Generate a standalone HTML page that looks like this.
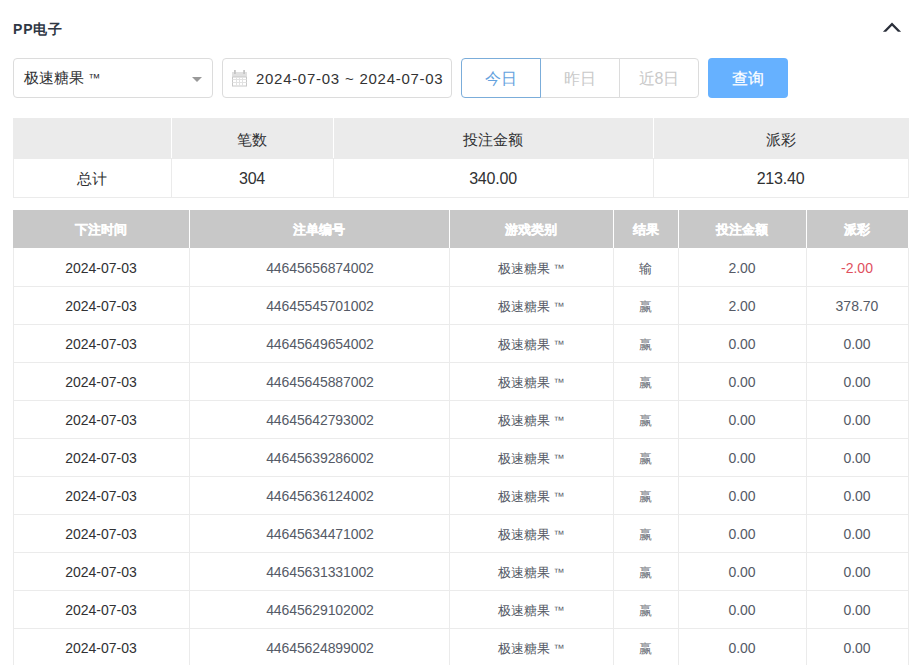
<!DOCTYPE html><html><head><meta charset="utf-8"><style>
*{margin:0;padding:0;box-sizing:border-box}
html,body{width:911px;height:665px;overflow:hidden;background:#fff}
body{position:relative;font-family:"Liberation Sans",sans-serif;color:#303133}
.a{position:absolute}
.title{left:13px;top:20px;font-size:14px;font-weight:bold;color:#2f3744;line-height:18px;letter-spacing:0.8px}
.chev{left:881px;top:20px}
.box{border:1px solid #dcdcdc;border-radius:4px;background:#fff}
.sel{left:13px;top:58px;width:200px;height:40px}
.seltxt{left:24px;top:68px;font-size:15px;line-height:20px;color:#303133}
.tri{left:192px;top:77px;width:0;height:0;border-left:5px solid transparent;border-right:5px solid transparent;border-top:5px solid #999}
.date{left:222px;top:58px;width:230px;height:40px}
.datetxt{left:256px;top:69px;font-size:15px;line-height:20px;color:#333;white-space:nowrap;letter-spacing:0.7px;word-spacing:0.3px}
.bg{top:58px;height:40px;font-size:16px;line-height:40px;text-align:center;color:#c9c9c9;border:1px solid #dcdcdc;background:#fff}
.q{left:708px;top:58px;width:80px;height:40px;background:#66b1ff;border-radius:4px;color:#fff;font-size:16px;line-height:41px;text-align:center;-webkit-text-stroke:0.2px #fff}
.cell{position:absolute;text-align:center;white-space:nowrap}
</style></head><body><div class="a title">PP电子</div>
<svg class="a chev" width="22" height="14" viewBox="0 0 22 14"><polygon points="1.9,11.7 11,2.4 20.1,11.7 16.9,11.7 11,5.7 5.1,11.7" fill="#2a2f3a"/></svg>
<div class="a box sel"></div><div class="a seltxt">极速糖果 <span style="font-size:12px;position:relative;top:-1px">™</span></div><div class="a tri"></div>
<div class="a box date"></div>
<svg class="a" style="left:226px;top:64px" width="28" height="28" viewBox="0 0 28 28"><rect x="6.5" y="8.5" width="14" height="13.5" fill="none" stroke="#c8c8c8" stroke-width="1"/><rect x="6" y="8" width="15" height="5" fill="#e0e0e0"/><line x1="6.5" y1="13" x2="20.5" y2="13" stroke="#c8c8c8"/><rect x="8" y="6" width="1.8" height="4" fill="#c4c4c4"/><rect x="17.2" y="6" width="1.8" height="4" fill="#c4c4c4"/><g stroke="#e2e2e2" stroke-width="1"><line x1="10.5" y1="13" x2="10.5" y2="22"/><line x1="13.5" y1="13" x2="13.5" y2="22"/><line x1="16.5" y1="13" x2="16.5" y2="22"/><line x1="6.5" y1="15.5" x2="20.5" y2="15.5"/><line x1="6.5" y1="18.5" x2="20.5" y2="18.5"/></g></svg>
<div class="a datetxt">2024-07-03 ~ 2024-07-03</div>
<div class="a bg" style="left:461px;width:80px;border-color:#7badda;color:#64a2de;border-radius:4px 0 0 4px;z-index:2">今日</div>
<div class="a bg" style="left:540px;width:80px">昨日</div>
<div class="a bg" style="left:619px;width:80px;border-radius:0 4px 4px 0">近8日</div>
<div class="a q">查询</div>
<div class="a" style="left:13px;top:118px;width:896px;height:40px;background:#ebebeb"></div>
<div class="a" style="left:13px;top:118px;width:896px;height:80px;border:1px solid #ebebeb;border-top:none"></div>
<div class="a" style="left:13px;top:158px;width:896px;height:1px;background:#ebebeb"></div>
<div class="a" style="left:171px;top:118px;width:1px;height:40px;background:#fff"></div>
<div class="a" style="left:171px;top:158px;width:1px;height:40px;background:#ebebeb"></div>
<div class="a" style="left:333px;top:118px;width:1px;height:40px;background:#fff"></div>
<div class="a" style="left:333px;top:158px;width:1px;height:40px;background:#ebebeb"></div>
<div class="a" style="left:653px;top:118px;width:1px;height:40px;background:#fff"></div>
<div class="a" style="left:653px;top:158px;width:1px;height:40px;background:#ebebeb"></div>
<div class="cell" style="left:13px;top:120px;width:158px;height:40px;line-height:40px;font-size:15px;color:#303133"></div>
<div class="cell" style="left:13px;top:158px;width:158px;height:40px;line-height:41px;font-size:15px;color:#303133">总计</div>
<div class="cell" style="left:171px;top:120px;width:162px;height:40px;line-height:40px;font-size:15px;color:#303133">笔数</div>
<div class="cell" style="left:171px;top:158px;width:162px;height:40px;line-height:41px;font-size:16px;letter-spacing:-0.2px;color:#303133">304</div>
<div class="cell" style="left:333px;top:120px;width:320px;height:40px;line-height:40px;font-size:15px;color:#303133">投注金额</div>
<div class="cell" style="left:333px;top:158px;width:320px;height:40px;line-height:41px;font-size:16px;letter-spacing:-0.2px;color:#303133">340.00</div>
<div class="cell" style="left:653px;top:120px;width:255px;height:40px;line-height:40px;font-size:15px;color:#303133">派彩</div>
<div class="cell" style="left:653px;top:158px;width:255px;height:40px;line-height:41px;font-size:16px;letter-spacing:-0.2px;color:#303133">213.40</div>
<div class="a" style="left:13px;top:210px;width:895px;height:38px;background:#c8c8c8"></div>
<div class="a" style="left:189px;top:210px;width:1px;height:38px;background:#fff"></div>
<div class="a" style="left:449px;top:210px;width:1px;height:38px;background:#fff"></div>
<div class="a" style="left:613px;top:210px;width:1px;height:38px;background:#fff"></div>
<div class="a" style="left:678px;top:210px;width:1px;height:38px;background:#fff"></div>
<div class="a" style="left:806px;top:210px;width:1px;height:38px;background:#fff"></div>
<div class="cell" style="left:13px;top:211px;width:176px;height:38px;line-height:38px;font-size:13px;font-weight:bold;color:#fff;-webkit-text-stroke:0.3px #fff">下注时间</div>
<div class="cell" style="left:189px;top:211px;width:260px;height:38px;line-height:38px;font-size:13px;font-weight:bold;color:#fff;-webkit-text-stroke:0.3px #fff">注单编号</div>
<div class="cell" style="left:449px;top:211px;width:164px;height:38px;line-height:38px;font-size:13px;font-weight:bold;color:#fff;-webkit-text-stroke:0.3px #fff">游戏类别</div>
<div class="cell" style="left:613px;top:211px;width:65px;height:38px;line-height:38px;font-size:13px;font-weight:bold;color:#fff;-webkit-text-stroke:0.3px #fff">结果</div>
<div class="cell" style="left:678px;top:211px;width:128px;height:38px;line-height:38px;font-size:13px;font-weight:bold;color:#fff;-webkit-text-stroke:0.3px #fff">投注金额</div>
<div class="cell" style="left:806px;top:211px;width:102px;height:38px;line-height:38px;font-size:13px;font-weight:bold;color:#fff;-webkit-text-stroke:0.3px #fff">派彩</div>
<div class="cell" style="left:13px;top:248px;width:176px;height:38px;line-height:41px;font-size:14px;color:#303133">2024-07-03</div>
<div class="cell" style="left:189px;top:248px;width:260px;height:38px;line-height:41px;font-size:14px;color:#555a66;letter-spacing:-0.1px;padding-left:2px">44645656874002</div>
<div class="cell" style="left:449px;top:248px;width:164px;height:38px;line-height:41px;font-size:14px;color:#555a66"><span style="font-size:13px">极速糖果</span> <span style="font-size:11px;position:relative;top:-1px">™</span></div>
<div class="cell" style="left:613px;top:248px;width:65px;height:38px;line-height:41px;font-size:14px;color:#555a66"><span style="font-size:13px">输</span></div>
<div class="cell" style="left:678px;top:248px;width:128px;height:38px;line-height:41px;font-size:14px;color:#555a66">2.00</div>
<div class="cell" style="left:806px;top:248px;width:102px;height:38px;line-height:41px;font-size:14px;color:#e0505e">-2.00</div>
<div class="a" style="left:13px;top:286px;width:896px;height:1px;background:#ebebeb"></div>
<div class="cell" style="left:13px;top:286px;width:176px;height:38px;line-height:41px;font-size:14px;color:#303133">2024-07-03</div>
<div class="cell" style="left:189px;top:286px;width:260px;height:38px;line-height:41px;font-size:14px;color:#555a66;letter-spacing:-0.1px;padding-left:2px">44645545701002</div>
<div class="cell" style="left:449px;top:286px;width:164px;height:38px;line-height:41px;font-size:14px;color:#555a66"><span style="font-size:13px">极速糖果</span> <span style="font-size:11px;position:relative;top:-1px">™</span></div>
<div class="cell" style="left:613px;top:286px;width:65px;height:38px;line-height:41px;font-size:14px;color:#555a66"><span style="font-size:13px;color:#70747c">赢</span></div>
<div class="cell" style="left:678px;top:286px;width:128px;height:38px;line-height:41px;font-size:14px;color:#555a66">2.00</div>
<div class="cell" style="left:806px;top:286px;width:102px;height:38px;line-height:41px;font-size:14px;color:#555a66">378.70</div>
<div class="a" style="left:13px;top:324px;width:896px;height:1px;background:#ebebeb"></div>
<div class="cell" style="left:13px;top:324px;width:176px;height:38px;line-height:41px;font-size:14px;color:#303133">2024-07-03</div>
<div class="cell" style="left:189px;top:324px;width:260px;height:38px;line-height:41px;font-size:14px;color:#555a66;letter-spacing:-0.1px;padding-left:2px">44645649654002</div>
<div class="cell" style="left:449px;top:324px;width:164px;height:38px;line-height:41px;font-size:14px;color:#555a66"><span style="font-size:13px">极速糖果</span> <span style="font-size:11px;position:relative;top:-1px">™</span></div>
<div class="cell" style="left:613px;top:324px;width:65px;height:38px;line-height:41px;font-size:14px;color:#555a66"><span style="font-size:13px;color:#70747c">赢</span></div>
<div class="cell" style="left:678px;top:324px;width:128px;height:38px;line-height:41px;font-size:14px;color:#555a66">0.00</div>
<div class="cell" style="left:806px;top:324px;width:102px;height:38px;line-height:41px;font-size:14px;color:#555a66">0.00</div>
<div class="a" style="left:13px;top:362px;width:896px;height:1px;background:#ebebeb"></div>
<div class="cell" style="left:13px;top:362px;width:176px;height:38px;line-height:41px;font-size:14px;color:#303133">2024-07-03</div>
<div class="cell" style="left:189px;top:362px;width:260px;height:38px;line-height:41px;font-size:14px;color:#555a66;letter-spacing:-0.1px;padding-left:2px">44645645887002</div>
<div class="cell" style="left:449px;top:362px;width:164px;height:38px;line-height:41px;font-size:14px;color:#555a66"><span style="font-size:13px">极速糖果</span> <span style="font-size:11px;position:relative;top:-1px">™</span></div>
<div class="cell" style="left:613px;top:362px;width:65px;height:38px;line-height:41px;font-size:14px;color:#555a66"><span style="font-size:13px;color:#70747c">赢</span></div>
<div class="cell" style="left:678px;top:362px;width:128px;height:38px;line-height:41px;font-size:14px;color:#555a66">0.00</div>
<div class="cell" style="left:806px;top:362px;width:102px;height:38px;line-height:41px;font-size:14px;color:#555a66">0.00</div>
<div class="a" style="left:13px;top:400px;width:896px;height:1px;background:#ebebeb"></div>
<div class="cell" style="left:13px;top:400px;width:176px;height:38px;line-height:41px;font-size:14px;color:#303133">2024-07-03</div>
<div class="cell" style="left:189px;top:400px;width:260px;height:38px;line-height:41px;font-size:14px;color:#555a66;letter-spacing:-0.1px;padding-left:2px">44645642793002</div>
<div class="cell" style="left:449px;top:400px;width:164px;height:38px;line-height:41px;font-size:14px;color:#555a66"><span style="font-size:13px">极速糖果</span> <span style="font-size:11px;position:relative;top:-1px">™</span></div>
<div class="cell" style="left:613px;top:400px;width:65px;height:38px;line-height:41px;font-size:14px;color:#555a66"><span style="font-size:13px;color:#70747c">赢</span></div>
<div class="cell" style="left:678px;top:400px;width:128px;height:38px;line-height:41px;font-size:14px;color:#555a66">0.00</div>
<div class="cell" style="left:806px;top:400px;width:102px;height:38px;line-height:41px;font-size:14px;color:#555a66">0.00</div>
<div class="a" style="left:13px;top:438px;width:896px;height:1px;background:#ebebeb"></div>
<div class="cell" style="left:13px;top:438px;width:176px;height:38px;line-height:41px;font-size:14px;color:#303133">2024-07-03</div>
<div class="cell" style="left:189px;top:438px;width:260px;height:38px;line-height:41px;font-size:14px;color:#555a66;letter-spacing:-0.1px;padding-left:2px">44645639286002</div>
<div class="cell" style="left:449px;top:438px;width:164px;height:38px;line-height:41px;font-size:14px;color:#555a66"><span style="font-size:13px">极速糖果</span> <span style="font-size:11px;position:relative;top:-1px">™</span></div>
<div class="cell" style="left:613px;top:438px;width:65px;height:38px;line-height:41px;font-size:14px;color:#555a66"><span style="font-size:13px;color:#70747c">赢</span></div>
<div class="cell" style="left:678px;top:438px;width:128px;height:38px;line-height:41px;font-size:14px;color:#555a66">0.00</div>
<div class="cell" style="left:806px;top:438px;width:102px;height:38px;line-height:41px;font-size:14px;color:#555a66">0.00</div>
<div class="a" style="left:13px;top:476px;width:896px;height:1px;background:#ebebeb"></div>
<div class="cell" style="left:13px;top:476px;width:176px;height:38px;line-height:41px;font-size:14px;color:#303133">2024-07-03</div>
<div class="cell" style="left:189px;top:476px;width:260px;height:38px;line-height:41px;font-size:14px;color:#555a66;letter-spacing:-0.1px;padding-left:2px">44645636124002</div>
<div class="cell" style="left:449px;top:476px;width:164px;height:38px;line-height:41px;font-size:14px;color:#555a66"><span style="font-size:13px">极速糖果</span> <span style="font-size:11px;position:relative;top:-1px">™</span></div>
<div class="cell" style="left:613px;top:476px;width:65px;height:38px;line-height:41px;font-size:14px;color:#555a66"><span style="font-size:13px;color:#70747c">赢</span></div>
<div class="cell" style="left:678px;top:476px;width:128px;height:38px;line-height:41px;font-size:14px;color:#555a66">0.00</div>
<div class="cell" style="left:806px;top:476px;width:102px;height:38px;line-height:41px;font-size:14px;color:#555a66">0.00</div>
<div class="a" style="left:13px;top:514px;width:896px;height:1px;background:#ebebeb"></div>
<div class="cell" style="left:13px;top:514px;width:176px;height:38px;line-height:41px;font-size:14px;color:#303133">2024-07-03</div>
<div class="cell" style="left:189px;top:514px;width:260px;height:38px;line-height:41px;font-size:14px;color:#555a66;letter-spacing:-0.1px;padding-left:2px">44645634471002</div>
<div class="cell" style="left:449px;top:514px;width:164px;height:38px;line-height:41px;font-size:14px;color:#555a66"><span style="font-size:13px">极速糖果</span> <span style="font-size:11px;position:relative;top:-1px">™</span></div>
<div class="cell" style="left:613px;top:514px;width:65px;height:38px;line-height:41px;font-size:14px;color:#555a66"><span style="font-size:13px;color:#70747c">赢</span></div>
<div class="cell" style="left:678px;top:514px;width:128px;height:38px;line-height:41px;font-size:14px;color:#555a66">0.00</div>
<div class="cell" style="left:806px;top:514px;width:102px;height:38px;line-height:41px;font-size:14px;color:#555a66">0.00</div>
<div class="a" style="left:13px;top:552px;width:896px;height:1px;background:#ebebeb"></div>
<div class="cell" style="left:13px;top:552px;width:176px;height:38px;line-height:41px;font-size:14px;color:#303133">2024-07-03</div>
<div class="cell" style="left:189px;top:552px;width:260px;height:38px;line-height:41px;font-size:14px;color:#555a66;letter-spacing:-0.1px;padding-left:2px">44645631331002</div>
<div class="cell" style="left:449px;top:552px;width:164px;height:38px;line-height:41px;font-size:14px;color:#555a66"><span style="font-size:13px">极速糖果</span> <span style="font-size:11px;position:relative;top:-1px">™</span></div>
<div class="cell" style="left:613px;top:552px;width:65px;height:38px;line-height:41px;font-size:14px;color:#555a66"><span style="font-size:13px;color:#70747c">赢</span></div>
<div class="cell" style="left:678px;top:552px;width:128px;height:38px;line-height:41px;font-size:14px;color:#555a66">0.00</div>
<div class="cell" style="left:806px;top:552px;width:102px;height:38px;line-height:41px;font-size:14px;color:#555a66">0.00</div>
<div class="a" style="left:13px;top:590px;width:896px;height:1px;background:#ebebeb"></div>
<div class="cell" style="left:13px;top:590px;width:176px;height:38px;line-height:41px;font-size:14px;color:#303133">2024-07-03</div>
<div class="cell" style="left:189px;top:590px;width:260px;height:38px;line-height:41px;font-size:14px;color:#555a66;letter-spacing:-0.1px;padding-left:2px">44645629102002</div>
<div class="cell" style="left:449px;top:590px;width:164px;height:38px;line-height:41px;font-size:14px;color:#555a66"><span style="font-size:13px">极速糖果</span> <span style="font-size:11px;position:relative;top:-1px">™</span></div>
<div class="cell" style="left:613px;top:590px;width:65px;height:38px;line-height:41px;font-size:14px;color:#555a66"><span style="font-size:13px;color:#70747c">赢</span></div>
<div class="cell" style="left:678px;top:590px;width:128px;height:38px;line-height:41px;font-size:14px;color:#555a66">0.00</div>
<div class="cell" style="left:806px;top:590px;width:102px;height:38px;line-height:41px;font-size:14px;color:#555a66">0.00</div>
<div class="a" style="left:13px;top:628px;width:896px;height:1px;background:#ebebeb"></div>
<div class="cell" style="left:13px;top:628px;width:176px;height:38px;line-height:41px;font-size:14px;color:#303133">2024-07-03</div>
<div class="cell" style="left:189px;top:628px;width:260px;height:38px;line-height:41px;font-size:14px;color:#555a66;letter-spacing:-0.1px;padding-left:2px">44645624899002</div>
<div class="cell" style="left:449px;top:628px;width:164px;height:38px;line-height:41px;font-size:14px;color:#555a66"><span style="font-size:13px">极速糖果</span> <span style="font-size:11px;position:relative;top:-1px">™</span></div>
<div class="cell" style="left:613px;top:628px;width:65px;height:38px;line-height:41px;font-size:14px;color:#555a66"><span style="font-size:13px;color:#70747c">赢</span></div>
<div class="cell" style="left:678px;top:628px;width:128px;height:38px;line-height:41px;font-size:14px;color:#555a66">0.00</div>
<div class="cell" style="left:806px;top:628px;width:102px;height:38px;line-height:41px;font-size:14px;color:#555a66">0.00</div>
<div class="a" style="left:13px;top:666px;width:896px;height:1px;background:#ebebeb"></div>
<div class="a" style="left:13px;top:248px;width:1px;height:420px;background:#ebebeb"></div>
<div class="a" style="left:189px;top:248px;width:1px;height:420px;background:#ebebeb"></div>
<div class="a" style="left:449px;top:248px;width:1px;height:420px;background:#ebebeb"></div>
<div class="a" style="left:613px;top:248px;width:1px;height:420px;background:#ebebeb"></div>
<div class="a" style="left:678px;top:248px;width:1px;height:420px;background:#ebebeb"></div>
<div class="a" style="left:806px;top:248px;width:1px;height:420px;background:#ebebeb"></div>
<div class="a" style="left:908px;top:248px;width:1px;height:420px;background:#ebebeb"></div></body></html>
